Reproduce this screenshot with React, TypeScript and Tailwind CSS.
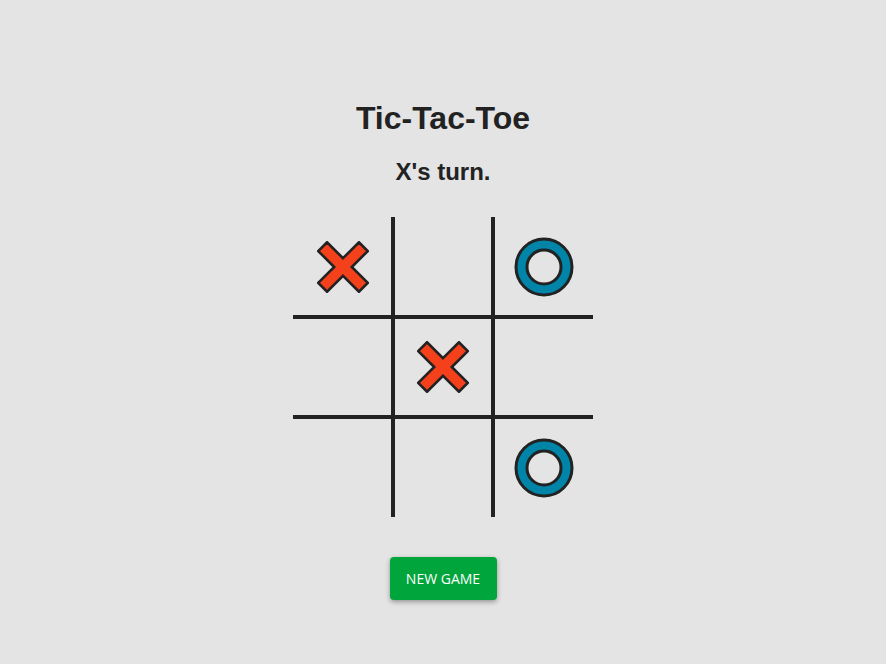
import React from "react";

type V = "X" | "O" | null;

const board: V[] = ["X", null, "O", null, "X", null, null, null, "O"];

function XMark() {
  return (
    <svg width="52" height="52" viewBox="0 0 52 52">
      <polygon
        points="26,17.2 41.95,1.25 50.75,10.05 34.8,26 50.75,41.95 41.95,50.75 26,34.8 10.05,50.75 1.25,41.95 17.2,26 1.25,10.05 10.05,1.25"
        fill="#f5411b"
        stroke="#222222"
        strokeWidth="2.6"
        strokeLinejoin="miter"
      />
    </svg>
  );
}

function OMark() {
  return (
    <svg width="60" height="60" viewBox="0 0 60 60">
      <circle cx="30" cy="30" r="28" fill="#0085a8" stroke="#222222" strokeWidth="3" />
      <circle cx="30" cy="30" r="17" fill="#e4e4e4" stroke="#222222" strokeWidth="3" />
    </svg>
  );
}

export default function App() {
  return (
    <div
      className="min-h-[664px] w-full bg-[#e4e4e4] flex flex-col items-center pt-[100px] text-[#222222]"
      style={{ fontFamily: '"Liberation Sans", Arial, sans-serif' }}
    >
      <h1 className="text-[32px] leading-[37px] font-bold">Tic-Tac-Toe</h1>
      <h2 className="mt-[21px] text-[24px] leading-[28px] font-bold">X's turn.</h2>
      <div className="mt-[31px] grid grid-cols-[100px_100px_100px] grid-rows-[100px_100px_100px] w-[300px] h-[300px]">
        {board.map((v, i) => {
          const col = i % 3;
          const row = Math.floor(i / 3);
          const cls = [
            "flex items-center justify-center box-border border-[#222222]",
            col > 0 ? "border-l-2" : "pl-[2px]",
            col < 2 ? "border-r-2" : "",
            row > 0 ? "border-t-2" : "pt-[1px]",
            row < 2 ? "border-b-2" : "",
          ].join(" ");
          return (
            <div key={i} className={cls}>
              {v === "X" ? <XMark /> : v === "O" ? <OMark /> : null}
            </div>
          );
        })}
      </div>
      <button
        className="mt-[40px] w-[107px] h-[43px] rounded-[4px] bg-[#00a53b] text-white text-[14px] shadow-[0_2px_5px_rgba(0,0,0,0.35)]"
        style={{ fontFamily: '"Open Sans", sans-serif' }}
      >
        NEW GAME
      </button>
    </div>
  );
}
